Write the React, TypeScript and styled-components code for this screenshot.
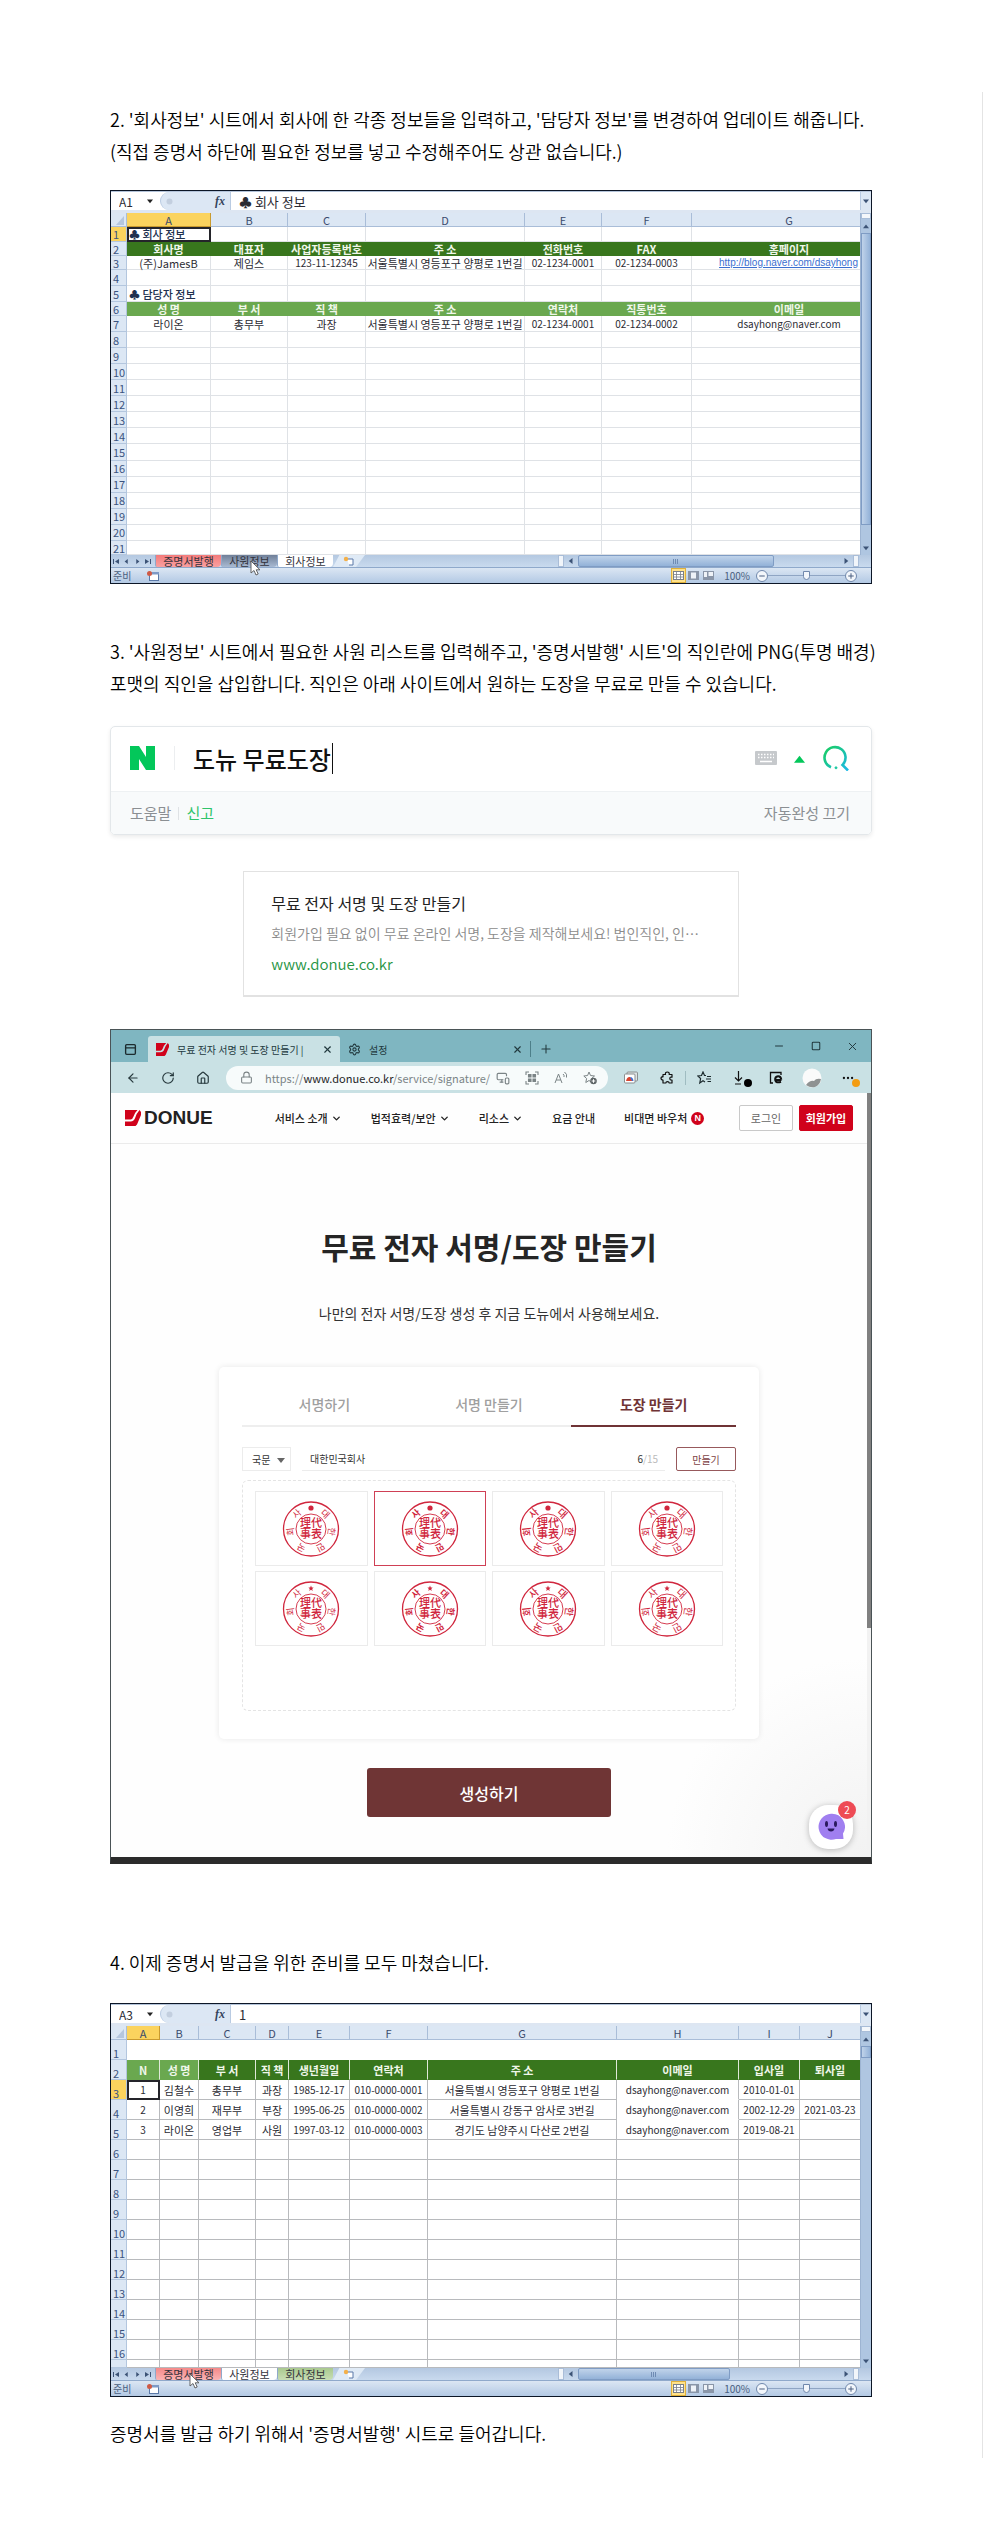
import React from 'react';
import styled, { createGlobalStyle, css } from 'styled-components';
import {
  ArrowLeft, RotateCw, House, Lock, X, Plus, Minus, Square, Settings, MonitorSmartphone,
  ChevronDown, PanelTop, Ellipsis,
} from 'lucide-react';

const KR = `'Noto Sans CJK KR', 'Noto Sans', sans-serif`;

const GlobalStyle = createGlobalStyle`
  * { box-sizing: border-box; }
  body { margin: 0; background: #fff; color: #000; font-family: ${KR}; }
  button, input, select { font-family: inherit; margin: 0; padding: 0; border: 0; background: none; color: inherit; }
  button { cursor: pointer; }
  svg { display: block; flex: none; }
`;

/* ---------- article ---------- */

const Article = styled.main`
  margin-top: 92px;
  padding: 11px 110px 9px;
  border-right: 1px solid #e4e4e4;
`;

const Para = styled.p<{ $top?: number }>`
  margin: ${p => p.$top ?? 0}px 0 0;
  font-size: 18px;
  line-height: 32px;
  font-weight: 350;
  white-space: nowrap;
`;

const Figure = styled.div<{ $top: number }>`
  margin-top: ${p => p.$top}px;
`;

/* ---------- spreadsheet ---------- */

const SheetFrame = styled.section`
  border: 1px solid #0c1626;
  background: #fff;
  color: #2b2b33;
`;

const FormulaBar = styled.div`
  display: flex;
  height: 22px;
  border-top: 1px solid #b4c4da;
  border-bottom: 3px solid #dde6f2;
  font-size: 12px;
`;

const NameBox = styled.label`
  display: flex;
  align-items: center;
  width: 49px;
  padding-left: 8px;
  input { width: 28px; font-size: 12px; height: 18px; }
`;

const FxArea = styled.div`
  display: flex;
  align-items: center;
  justify-content: space-between;
  width: 71px;
  margin-right: 8px;
  padding: 0 5px 0 4px;
  border-left: 1px solid #b9cbe2;
  border-right: 1px solid #b9cbe2;
  border-radius: 9px 0 0 9px;
  background: #dce7f4;
  color: #33435c;
  em { font: italic bold 12px 'Liberation Serif', serif; }
`;

const FormulaInput = styled.input`
  flex: 1;
  min-width: 0;
  font-size: 13px;
  height: 18px;
`;

const DropButton = styled.button`
  display: flex;
  align-items: center;
  justify-content: center;
  width: 11px;
  background: #dce7f4;
  border-left: 1px solid #b9cbe2;
`;

const GridArea = styled.div`
  display: flex;
  height: 342px;
`;

const Grid = styled.table<{ $line: string; $lastPad: number }>`
  flex: 1;
  width: 100%;
  height: 342px;
  table-layout: fixed;
  border-collapse: separate;
  border-spacing: 0;
  font-size: 11px;
  line-height: 12px;
  th, td {
    padding: 0;
    white-space: nowrap;
    text-align: center;
    border-right: 1px solid ${p => p.$line};
    border-bottom: 1px solid ${p => p.$line};
  }
  tr > :last-child { border-right: 0; padding-left: ${p => p.$lastPad}px; }
`;

const ColHead = styled.th<{ $on?: boolean }>`
  height: 14px;
  && { border-color: ${p => (p.$on ? '#c99a2e' : '#a9bdd8')}; }
  background: ${p => (p.$on ? '#fbd35e' : '#dce7f4')};
  color: #3a4a6c;
  font-weight: 400;
`;

const RowHead = styled.th<{ $on?: boolean; $low?: boolean }>`
  && { border-color: #b3c6de; text-align: left; padding-left: 2px; }
  background: ${p => (p.$on ? '#fbd35e' : '#dce7f4')};
  color: #3b5480;
  font-weight: 400;
  vertical-align: ${p => (p.$low ? 'bottom' : 'middle')};
`;

const Cell = styled.td<{ $bg?: string; $sel?: boolean; $num?: boolean; $left?: boolean; $link?: boolean; $noLine?: boolean; $sepColor?: string }>`
  ${p => p.$bg && css`
    && { border-bottom-color: ${p.$bg}; border-right-color: ${p.$sepColor ?? p.$bg}; }
    background: ${p.$bg};
    color: #f0f7ea;
    font-weight: 700;
  `}
  ${p => p.$num && css`font-size: 10px;`}
  ${p => p.$left && css`&& { text-align: left; padding-left: 2px; } color: #20304f; font-weight: 500;`}
  ${p => p.$link && css`&&&& { text-align: right; padding: 0 2px 0 0; }`}
  ${p => p.$noLine && css`&& { border-bottom-color: transparent; }`}
  ${p => p.$sel && css`outline: 2px solid #24242a; outline-offset: -2px;`}
`;

const CellLink = styled.a`
  font-family: 'Liberation Sans', sans-serif;
  font-size: 10px;
  color: #3b6fd0;
`;

const VScroll = styled.div`
  display: flex;
  flex-direction: column;
  width: 11px;
  background: #afc6e1;
  border-left: 1px solid #9db4d2;
`;

const VSplit = styled.div`
  height: 6px;
  background: #f4f7fb;
  border: 1px solid #a9bdd8;
`;

const ArrowSlot = styled.button`
  display: flex;
  align-items: center;
  justify-content: center;
  width: 100%;
  height: 14px;
`;

const VThumb = styled.div<{ $h: number }>`
  height: ${p => p.$h}px;
  margin-bottom: auto;
  border: 1px solid #7f9cc4;
  background: linear-gradient(90deg, #c0d3ea, #93b2d8);
`;

const TabStrip = styled.div`
  display: flex;
  height: 13px;
  background: linear-gradient(#b4c8e1, #c9daee);
  border-bottom: 1px solid #8fa9cb;
`;

const NavArrows = styled.div`
  display: flex;
  align-items: center;
  justify-content: space-between;
  width: 44px;
  padding: 0 4px 0 2px;
`;

const SheetTab = styled.button<{ $bg: string }>`
  position: relative;
  width: 56px;
  height: 12px;
  font-size: 11px;
  line-height: 11px;
  color: #33333c;
  background: ${p => p.$bg};
  border-left: 1px solid #8fa9cb;
  border-radius: 0 0 4px 2px;
  white-space: nowrap;
  &:first-of-type { width: 66px; }
`;

const NewTab = styled.button`
  display: flex;
  align-items: center;
  justify-content: center;
  width: 32px;
  height: 12px;
  background: #dfeaf6;
  clip-path: polygon(20% 0, 100% 0, 72% 100%, 0 100%);
`;

const Pointer = styled.svg`
  position: absolute;
  z-index: 2;
  left: 50%;
  top: 5px;
`;

const HScroll = styled.div`
  display: flex;
  align-items: stretch;
  width: 313px;
  margin-left: auto;
  padding-right: 12px;
`;

const SplitBox = styled.div`
  width: 6px;
  background: #f1f5fa;
  border: 1px solid #a9bdd8;
`;

const HArrow = styled.button`
  display: flex;
  align-items: center;
  justify-content: center;
  width: 14px;
`;

const HThumb = styled.div<{ $w: number }>`
  display: flex;
  align-items: center;
  justify-content: center;
  width: ${p => p.$w}px;
  margin-right: auto;
  border: 1px solid #7f9cc4;
  border-radius: 2px;
  background: linear-gradient(#c0d3ea, #93b2d8);
`;

const StatusBar = styled.div`
  display: flex;
  align-items: center;
  height: 15px;
  padding: 0 14px 0 2px;
  background: linear-gradient(#dbe6f3, #b3c9e4);
  font-size: 10px;
  line-height: 14px;
  color: #4a5f80;
  label { margin-right: 6px; }
`;

const Ready = styled.span`
  width: 33px;
`;

const ViewGroup = styled.div`
  display: flex;
  margin-left: auto;
  margin-right: 8px;
`;

const ViewButton = styled.button<{ $on?: boolean }>`
  display: flex;
  align-items: center;
  justify-content: center;
  width: 15px;
  height: 15px;
  ${p => p.$on && css`background: #ffe28a; border: 1px solid #e0b13c;`}
`;

const RoundButton = styled.button`
  display: flex;
  align-items: center;
  justify-content: center;
  width: 12px;
  height: 12px;
  border: 1px solid #7088ac;
  border-radius: 6px;
  background: #f2f6fb;
`;

const ZoomRange = styled.input`
  appearance: none;
  width: 77px;
  height: 12px;
  background: linear-gradient(#8fa5c4, #8fa5c4) center / 100% 1px no-repeat;
  &::-webkit-slider-thumb {
    appearance: none;
    width: 7px;
    height: 9px;
    border: 1px solid #7088ac;
    border-radius: 0 0 4px 4px;
    background: #f2f6fb;
  }
`;

const Tri = ({ dir, size = 6, color = '#3c5376' }: { dir: 'up' | 'down' | 'left' | 'right'; size?: number; color?: string }) => {
  const d = { up: 'M0 7 L4 2 L8 7Z', down: 'M0 2 L4 7 L8 2Z', left: 'M6 0 L1 4 L6 8Z', right: 'M2 0 L7 4 L2 8Z' }[dir];
  return <svg width={size} height={size} viewBox="0 0 8 8"><path d={d} fill={color} /></svg>;
};

const EndTri = ({ flip }: { flip?: boolean }) => (
  <svg width="6" height="5" viewBox="0 0 6 5" fill="#3c5376">
    <path d={flip ? 'M0 0 L4 2.500 L0 5Z M5 0H6V5H5Z' : 'M6 0 L2 2.500 L6 5Z M0 0H1V5H0Z'} />
  </svg>
);

const ArrowPointer = () => (
  <Pointer width="11" height="16" viewBox="0 0 11 16">
    <path d="M1 1 V13 L4 10.5 L6 15 L8.2 14 L6.2 9.8 H10Z" fill="#fff" stroke="#555" strokeWidth="0.9" />
  </Pointer>
);

interface CellData { t?: React.ReactNode; bg?: string; sel?: boolean; num?: boolean; left?: boolean; link?: boolean; noLine?: boolean; sep?: string }
interface RowData { n: number; h?: number; cells?: CellData[]; on?: boolean }
interface SheetProps {
  id: string; cell: string; formula: string; cols: number[]; rows: RowData[]; line: string; low?: boolean;
  lastPad?: number; vThumb: number; hThumb: number; tabs: { name: string; bg: string; pointer?: boolean }[];
}

const Sheet = ({ id, cell, formula, cols, rows, line, low, lastPad = 0, vThumb, hThumb, tabs }: SheetProps) => (
  <SheetFrame>
    <FormulaBar>
      <NameBox>
        <input aria-label="이름 상자" defaultValue={cell} />
        <Tri dir="down" color="#222" />
      </NameBox>
      <FxArea>
        <svg width="9" height="9" viewBox="0 0 9 9"><circle cx="4.5" cy="4.5" r="3" fill="#c3cfdf" /></svg>
        <em>fx</em>
      </FxArea>
      <FormulaInput aria-label="수식 입력줄" defaultValue={formula} />
      <DropButton aria-label="수식 펼치기"><Tri dir="down" /></DropButton>
    </FormulaBar>
    <GridArea>
      <Grid $line={line} $lastPad={lastPad}>
        <colgroup>{cols.map((w, i) => <col key={i} width={w} />)}</colgroup>
        <thead>
          <tr>
            <ColHead aria-label="모두 선택"><svg width="15" height="12" viewBox="0 0 15 12"><path d="M13 2V11H5Z" fill="#b5c6dd" /></svg></ColHead>
            {cols.slice(1).map((_, i) => <ColHead key={i} $on={i === 0} scope="col">{'ABCDEFGHIJ'[i]}</ColHead>)}
          </tr>
        </thead>
        <tbody>
          {rows.map(r => (
            <tr key={r.n} style={r.h ? { height: r.h } : undefined}>
              <RowHead scope="row" $on={r.on} $low={low}>{r.n > 0 ? r.n : null}</RowHead>
              {cols.slice(1).map((_, i) => {
                const c = r.cells?.[i] ?? {};
                return (
                  <Cell key={i} $bg={c.bg} $sel={c.sel} $num={c.num} $left={c.left} $link={c.link} $noLine={c.noLine} $sepColor={c.sep}>{c.t}</Cell>
                );
              })}
            </tr>
          ))}
        </tbody>
      </Grid>
      <VScroll>
        <VSplit />
        <ArrowSlot aria-label="위로"><Tri dir="up" /></ArrowSlot>
        <VThumb $h={vThumb} />
        <ArrowSlot aria-label="아래로"><Tri dir="down" /></ArrowSlot>
      </VScroll>
    </GridArea>
    <TabStrip>
      <NavArrows>
        <EndTri /><Tri dir="left" size={5} /><Tri dir="right" size={5} /><EndTri flip />
      </NavArrows>
      {tabs.map(t => (
        <SheetTab key={t.name} $bg={t.bg}>{t.name}{t.pointer && <ArrowPointer />}</SheetTab>
      ))}
      <NewTab aria-label="새 시트">
        <svg width="12" height="10" viewBox="0 0 12 10">
          <path d="M4 3H10V9H6" fill="#fff" stroke="#5b79a8" />
          <circle cx="3" cy="3" r="2.2" fill="#f3b04a" />
        </svg>
      </NewTab>
      <HScroll>
        <SplitBox />
        <HArrow aria-label="왼쪽"><Tri dir="left" /></HArrow>
        <HThumb $w={hThumb}>
          <svg width="6" height="5" viewBox="0 0 6 5"><path d="M.5 0V5M2.5 0V5M4.5 0V5" stroke="#6f8bb3" /></svg>
        </HThumb>
        <HArrow aria-label="오른쪽"><Tri dir="right" /></HArrow>
        <SplitBox />
      </HScroll>
    </TabStrip>
    <StatusBar>
      <Ready>준비</Ready>
      <svg width="14" height="12" viewBox="0 0 14 12">
        <rect x="3.5" y="2.5" width="9" height="8" fill="#fff" stroke="#5b79a8" />
        <rect x="3" y="2" width="10" height="2.5" fill="#7e9ac6" />
        <circle cx="3.5" cy="3.5" r="2.5" fill="#cf5a45" />
      </svg>
      <ViewGroup>
        <ViewButton $on aria-label="기본">
          <svg width="11" height="9" viewBox="0 0 11 9"><rect x=".5" y=".5" width="10" height="8" fill="#fff" stroke="#7a7f88" /><path d="M0 3.5H11M0 6H11M3.5 0V9M7.5 0V9" stroke="#7a7f88" strokeWidth=".8" /></svg>
        </ViewButton>
        <ViewButton aria-label="페이지 레이아웃">
          <svg width="11" height="9" viewBox="0 0 11 9"><rect width="11" height="9" fill="#8a96a8" /><rect x="3" y="1.5" width="5" height="6" fill="#eef2f7" /></svg>
        </ViewButton>
        <ViewButton aria-label="페이지 나누기">
          <svg width="11" height="9" viewBox="0 0 11 9"><rect width="11" height="9" fill="#8a96a8" /><path d="M1 1H4V6H1ZM5.500 1H10V5H5.500Z" fill="#eef2f7" /></svg>
        </ViewButton>
      </ViewGroup>
      <label htmlFor={`zoom-${id}`}>100%</label>
      <RoundButton aria-label="축소"><Minus size={8} strokeWidth={3} /></RoundButton>
      <ZoomRange id={`zoom-${id}`} type="range" defaultValue={50} />
      <RoundButton aria-label="확대"><Plus size={8} strokeWidth={3} /></RoundButton>
    </StatusBar>
  </SheetFrame>
);

const DARK = '#38761d';
const LIGHT = '#6aa84f';
const text = (t: string): CellData => ({ t });
const num = (t: string): CellData => ({ t, num: true });
const heads = (bg: string, names: string[]): CellData[] => names.map(t => ({ t, bg }));
const blanks = (from: number, to: number): RowData[] =>
  Array.from({ length: to - from + 1 }, (_, i) => ({ n: from + i }));

const companyRows: RowData[] = [
  { n: 1, h: 15, on: true, cells: [{ t: '♣ 회사 정보', left: true, sel: true }] },
  { n: 2, h: 14, cells: heads(DARK, ['회사명', '대표자', '사업자등록번호', '주 소', '전화번호', 'FAX', '홈페이지']) },
  {
    n: 3, h: 13, cells: [
      text('(주)JamesB'), text('제임스'), num('123-11-12345'), text('서울특별시 영등포구 양평로 1번길'),
      num('02-1234-0001'), num('02-1234-0003'),
      { link: true, num: true, t: <CellLink href="http://blog.naver.com/dsayhong">http://blog.naver.com/dsayhong</CellLink> },
    ],
  },
  { n: 4, h: 16 },
  { n: 5, h: 16, cells: [{ t: '♣ 담당자 정보', left: true }] },
  { n: 6, h: 14, cells: heads(LIGHT, ['성 명', '부 서', '직 책', '주 소', '연락처', '직통번호', '이메일']) },
  {
    n: 7, h: 16, cells: [
      text('라이온'), text('총무부'), text('과장'), text('서울특별시 영등포구 양평로 1번길'),
      num('02-1234-0001'), num('02-1234-0002'), num('dsayhong@naver.com'),
    ],
  },
  ...blanks(8, 20),
  { n: 21, h: 14 },
];

const person = (v: string[], last: boolean): CellData[] =>
  v.map((t, i) => ({ t, num: [0, 4, 5, 7, 8, 9].includes(i), sel: t === '1' && i === 0, noLine: i === 7 && !last }));

const staffRows: RowData[] = [
  { n: 1, h: 20, cells: Array.from({ length: 10 }, () => ({ bg: '#ffffff' })) },
  {
    n: 2, h: 20, cells: ['N', '성 명', '부 서', '직 책', '생년월일', '연락처', '주 소', '이메일', '입사일', '퇴사일']
      .map((t, i) => ({ t, bg: i < 2 ? LIGHT : DARK, sep: '#dfe9d8' })),
  },
  { n: 3, h: 20, on: true, cells: person(['1', '김철수', '총무부', '과장', '1985-12-17', '010-0000-0001', '서울특별시 영등포구 양평로 1번길', 'dsayhong@naver.com', '2010-01-01', ''], false) },
  { n: 4, h: 20, cells: person(['2', '이영희', '재무부', '부장', '1995-06-25', '010-0000-0002', '서울특별시 강동구 암사로 3번길', 'dsayhong@naver.com', '2002-12-29', '2021-03-23'], false) },
  { n: 5, h: 20, cells: person(['3', '라이온', '영업부', '사원', '1997-03-12', '010-0000-0003', '경기도 남양주시 다산로 2번길', 'dsayhong@naver.com', '2019-08-21', ''], true) },
  ...blanks(6, 16),
  { n: 0, h: 8 },
];

/* ---------- search box ---------- */

const SearchBox = styled.form`
  border: 1px solid #e3e7ea;
  border-radius: 5px;
  box-shadow: 0 2px 4px rgba(0, 0, 0, 0.08);
  overflow: hidden;
`;

const SearchTop = styled.div`
  display: flex;
  align-items: center;
  height: 64px;
  padding: 0 21px 2px 19px;
`;

const SearchDivider = styled.i`
  width: 1px;
  height: 24px;
  margin: 0 18px 0 19px;
  background: #eceef0;
`;

const SearchInput = styled.input`
  width: 139px;
  height: 32px;
  font-size: 24px;
  font-weight: 500;
  color: #111;
`;

const Caret = styled.i`
  width: 1px;
  height: 31px;
  margin-right: auto;
  background: #111;
`;

const SearchTools = styled.div`
  display: flex;
  align-items: center;
  gap: 17px;
  button { display: flex; }
`;

const SearchBottom = styled.div`
  display: flex;
  align-items: center;
  gap: 7px;
  height: 43px;
  padding: 0 21px 0 19px;
  border-top: 1px solid #eef1f3;
  background: #f8fafb;
  font-size: 15px;
  line-height: 20px;
`;

const BottomLink = styled.a<{ $color: string; $end?: boolean }>`
  color: ${p => p.$color};
  text-decoration: none;
  ${p => p.$end && css`margin-left: auto;`}
`;

const Bar = styled.i`
  width: 1px;
  height: 13px;
  background: #dfe2e5;
`;

/* ---------- result card ---------- */

const ResultCard = styled.article`
  width: 65%;
  margin: 36px auto 0;
  padding: 19px 26px 18px 27px;
  border: 1px solid #e2e2e2;
  border-bottom-width: 2px;
`;

const ResultTitle = styled.h3`
  margin: 0;
  font-size: 16px;
  line-height: 24px;
  font-weight: 400;
  color: #222;
`;

const ResultDesc = styled.p`
  margin: 5px 0 0;
  font-size: 14px;
  line-height: 26px;
  font-weight: 350;
  color: #8b8b8b;
  white-space: nowrap;
`;

const ResultUrl = styled.a`
  display: block;
  margin-top: 5px;
  font-size: 15px;
  line-height: 26px;
  font-weight: 350;
  color: #259443;
  text-decoration: none;
`;

/* ---------- browser window ---------- */

const Browser = styled.section`
  border: 1px solid #4a5356;
  border-bottom: 7px solid #2b2b2b;
`;

const TabBar = styled.div`
  display: flex;
  align-items: flex-end;
  height: 32px;
  background: #7fb6c1;
  color: #22393e;
`;

const PanelSlot = styled.button`
  display: flex;
  justify-content: center;
  width: 37px;
  padding: 0 0 6px 1px;
`;

const BrowserTab = styled.div<{ $on?: boolean }>`
  display: flex;
  align-items: center;
  gap: 8px;
  width: ${p => (p.$on ? 192 : 190)}px;
  height: 26px;
  padding: 0 7px 0 8px;
  border-radius: 3px 3px 0 0;
  background: ${p => (p.$on ? '#c9e1e4' : 'transparent')};
  font-size: 10px;
  white-space: nowrap;
  button { display: flex; margin-left: auto; }
`;

const NewTabButton = styled.button`
  display: flex;
  align-items: center;
  height: 16px;
  margin-bottom: 5px;
  padding-left: 8px;
  border-left: 1px solid #4d7f89;
`;

const WindowButtons = styled.div`
  display: flex;
  align-self: stretch;
  margin-left: auto;
  button { display: flex; align-items: center; justify-content: center; width: 37px; }
`;

const Toolbar = styled.div`
  display: flex;
  align-items: center;
  height: 31px;
  padding: 0 5px 0 15px;
  background: #c9e1e4;
  color: #26383c;
`;

const NavButtons = styled.div`
  display: flex;
  gap: 21px;
  margin-right: 16px;
  button { display: flex; }
`;

const AddressBar = styled.div`
  display: flex;
  flex: 1;
  align-items: center;
  height: 24px;
  margin-right: 5px;
  padding: 0 11px 0 14px;
  border-radius: 12px;
  background: #f7fbfb;
  color: #7b8486;
  font-size: 11px;
  line-height: 24px;
`;

const Url = styled.div`
  margin: 0 auto 0 12px;
  white-space: nowrap;
  b { font-weight: 400; color: #1d2527; }
`;

const AddressTools = styled.div`
  display: flex;
  gap: 15px;
`;

const ToolSlot = styled.button`
  position: relative;
  display: flex;
  align-items: center;
  justify-content: center;
  width: 36px;
  height: 24px;
`;

const ToolSep = styled.i`
  width: 1px;
  height: 14px;
  background: #9fbcc1;
`;

const Dot = styled.span<{ $bg: string }>`
  position: absolute;
  right: 6px;
  bottom: 3px;
  width: 8px;
  height: 8px;
  border-radius: 4px;
  background: ${p => p.$bg};
`;

const Viewport = styled.div`
  display: flex;
`;

const PageScroll = styled.div`
  width: 4px;
  background: #f2f2f2;
`;

const PageThumb = styled.div`
  height: 535px;
  background: #808080;
`;

const Page = styled.div`
  position: relative;
  flex: 1;
  padding-bottom: 40px;
  background: radial-gradient(circle at 100% 100%, #f2f2f2 0, #fefefe 200px);
`;

const SiteHeader = styled.header`
  display: flex;
  align-items: center;
  height: 51px;
  padding: 0 14px;
  border-bottom: 1px solid #ebebeb;
  font-size: 11px;
  white-space: nowrap;
  color: #222;
`;

const Brand = styled.a`
  display: flex;
  align-items: center;
  gap: 3px;
  margin-right: 62px;
  font: bold 19px 'Liberation Sans', sans-serif;
  color: #222;
  text-decoration: none;
`;

const SiteNav = styled.nav`
  display: flex;
  gap: 29px;
`;

const NavLink = styled.a`
  display: flex;
  align-items: center;
  gap: 3px;
  font-weight: 500;
  color: #222;
  text-decoration: none;
`;

const NewBadge = styled.span`
  width: 13px;
  height: 13px;
  margin-left: 1px;
  border-radius: 7px;
  background: #d0021b;
  color: #fff;
  font: bold 9px/13px 'Liberation Sans', sans-serif;
  text-align: center;
`;

const AuthButton = styled.button<{ $fill?: boolean }>`
  width: 54px;
  height: 26px;
  border: 1px solid ${p => (p.$fill ? '#d0021b' : '#c9c9c9')};
  border-radius: 2px;
  background: ${p => (p.$fill ? '#d0021b' : '#fff')};
  color: ${p => (p.$fill ? '#fff' : '#666')};
  font-size: 11px;
  font-weight: ${p => (p.$fill ? 700 : 400)};
`;

const Auth = styled.div`
  display: flex;
  gap: 6px;
  margin-left: auto;
`;

const Title = styled.h1`
  margin: 82px 0 0;
  font-size: 30px;
  line-height: 40px;
  font-weight: 700;
  text-align: center;
  color: #252525;
`;

const Lead = styled.p`
  margin: 37px 0 0;
  font-size: 14px;
  line-height: 20px;
  text-align: center;
  color: #333;
`;

const Maker = styled.div`
  width: 540px;
  max-width: 100%;
  margin: 44px auto 0;
  padding: 16px 23px 28px;
  border-radius: 5px;
  background: #fff;
  box-shadow: 0 0 6px rgba(0, 0, 0, 0.09);
`;

const MakerTabs = styled.div`
  display: grid;
  grid-template-columns: repeat(3, 1fr);
`;

const MakerTab = styled.button<{ $on?: boolean }>`
  height: 44px;
  border-bottom: 2px solid ${p => (p.$on ? '#6f3335' : '#eeeeee')};
  font-size: 14px;
  font-weight: ${p => (p.$on ? 700 : 500)};
  color: ${p => (p.$on ? '#6f3335' : '#a0a0a0')};
`;

const MakerForm = styled.div`
  display: flex;
  gap: 11px;
  height: 24px;
  margin-top: 20px;
  font-size: 10px;
  color: #333;
`;

const LangSelect = styled.div`
  position: relative;
  width: 49px;
  border: 1px solid #ececec;
  select { appearance: none; width: 100%; height: 22px; padding-left: 9px; font-size: 10px; }
  svg { position: absolute; right: 5px; top: 8px; pointer-events: none; }
`;

const NameField = styled.label`
  display: flex;
  flex: 1;
  align-items: center;
  padding: 0 7px 0 8px;
  border-bottom: 1px solid #ececec;
  input { flex: 1; min-width: 0; height: 22px; font-size: 10px; }
  span { color: #bbb; }
  b { color: #333; font-weight: 400; }
`;

const MakeButton = styled.button`
  width: 60px;
  border: 1px solid #97595c;
  border-radius: 2px;
  font-size: 10px;
  color: #7d4245;
`;

const StampGrid = styled.div`
  display: grid;
  grid-template-columns: repeat(4, 1fr);
  grid-auto-rows: 75px;
  gap: 5px 6px;
  height: 231px;
  margin-top: 9px;
  padding: 10px 12px;
  border: 1px dashed #e4e4e4;
  border-radius: 6px;
`;

const StampCell = styled.button<{ $on?: boolean }>`
  display: flex;
  align-items: center;
  justify-content: center;
  border: 1px solid ${p => (p.$on ? '#cf4055' : '#ebebeb')};
`;

const CreateButton = styled.button`
  display: block;
  width: 244px;
  height: 49px;
  margin: 29px auto 0;
  border-radius: 3px;
  background: #6f3535;
  color: #fff;
  font-size: 16px;
  font-weight: 500;
`;

const Chat = styled.button`
  position: absolute;
  right: 14px;
  bottom: 8px;
  display: flex;
  align-items: center;
  justify-content: center;
  width: 44px;
  height: 44px;
  border-radius: 19px;
  background: #fff;
  box-shadow: 0 1px 6px rgba(0, 0, 0, 0.25);
`;

const ChatCount = styled.span`
  position: absolute;
  right: -3px;
  top: -4px;
  width: 18px;
  height: 18px;
  border-radius: 9px;
  background: #ee4b55;
  color: #fff;
  font-size: 10px;
  line-height: 18px;
`;

const DonueMark = ({ size }: { size: number }) => (
  <svg width={size} height={size} viewBox="0 0 16 16">
    <path d="M0 0H12.500Q9.500 3 8.500 6.500 7.500 9.500 5.500 9.500H0ZM14.500 0 16 2V5L12 14.500 10.500 16H0V11.500H5.500Q9 11.500 10.300 7.500 11.500 3.500 14.500 0Z" fill="#d0021b" />
  </svg>
);

const RING: [string, number][] = [['대', 43], ['한', 97], ['민', 152], ['국', 208], ['회', 263], ['사', 317]];
const RING_STYLES = [
  { size: 9, weight: 400 },
  { size: 9, weight: 700 },
  { size: 10, weight: 500 },
  { size: 10, weight: 400 },
];

const Stamp = ({ variant, star }: { variant: number; star: boolean }) => {
  const s = RING_STYLES[variant];
  return (
    <svg width="58" height="56" viewBox="-29 -28 58 56" fontFamily={KR} fill="#d0263d" textAnchor="middle">
      <g fill="none" stroke="#d0263d">
        <ellipse rx="27.500" ry="27" strokeWidth="1.300" />
        <circle r="15" strokeWidth="0.900" />
      </g>
      {star
        ? <path d="M0-23.500 L.8-21.500H2.600L1.200-20 1.800-18 0-19.200-1.800-18-1.200-20-2.600-21.500H-.8Z" />
        : <circle cy="-21" r="2.600" />}
      {RING.map(([ch, a]) => (
        <text key={ch} transform={`rotate(${a}) translate(0 -17.500)`} fontSize={s.size} fontWeight={s.weight}>{ch}</text>
      ))}
      <g fontSize="11" fontWeight="500">
        <text y="-2">理代</text>
        <text y="9">事表</text>
      </g>
    </svg>
  );
};

const BrowserWindow = () => (
  <Browser>
    <TabBar>
      <PanelSlot aria-label="탭 작업"><PanelTop size={13} strokeWidth={2.500} color="#1c2b2e" /></PanelSlot>
      <BrowserTab $on>
        <DonueMark size={13} />
        <span>무료 전자 서명 및 도장 만들기 |</span>
        <button aria-label="탭 닫기"><X size={11} strokeWidth={2.500} /></button>
      </BrowserTab>
      <BrowserTab>
        <Settings size={13} />
        <span>설정</span>
        <button aria-label="탭 닫기"><X size={11} strokeWidth={2.500} /></button>
      </BrowserTab>
      <NewTabButton aria-label="새 탭"><Plus size={14} strokeWidth={1.800} /></NewTabButton>
      <WindowButtons>
        <button aria-label="최소화"><Minus size={12} /></button>
        <button aria-label="최대화"><Square size={10} strokeWidth={2.500} /></button>
        <button aria-label="닫기"><X size={13} strokeWidth={1.800} /></button>
      </WindowButtons>
    </TabBar>
    <Toolbar>
      <NavButtons>
        <button aria-label="뒤로"><ArrowLeft size={14} /></button>
        <button aria-label="새로 고침"><RotateCw size={14} /></button>
        <button aria-label="홈"><House size={14} /></button>
      </NavButtons>
      <AddressBar>
        <Lock size={13} />
        <Url role="textbox" aria-label="주소">https://<b>www.donue.co.kr</b>/service/signature/</Url>
        <AddressTools>
          <MonitorSmartphone size={14} />
          <svg width="14" height="14" viewBox="0 0 14 14" fill="none" stroke="currentColor" strokeWidth="1.100">
            <path d="M1 4V1H4M10 1H13V4M13 10V13H10M4 13H1V10" />
            <path d="M3.500 3.500H6V6H3.500ZM8 3.500H10.500V6H8ZM3.500 8H6V10.500H3.500ZM8 8H10.500V10.500H8Z" fill="currentColor" />
          </svg>
          <svg width="14" height="14" viewBox="0 0 14 14" fill="none" stroke="currentColor">
            <path d="M1 12 L4.500 3 L8 12M2.200 9H6.800M9 3Q10.500 4 10 6M10.500 1Q13.500 3 12.500 6.500" />
          </svg>
          <svg width="14" height="14" viewBox="0 0 14 14">
            <path d="M6 1 L7.500 4.500 11.500 5 8.500 7.500 9 11.500 6 9.500 2.800 11.500 3.600 7.500.8 5 4.600 4.500Z" fill="none" stroke="currentColor" />
            <circle cx="10.500" cy="10" r="3.300" fill="#5f6668" />
            <path d="M10.500 8.200V11.800M8.700 10H12.300" stroke="#fff" />
          </svg>
        </AddressTools>
      </AddressBar>
      <ToolSlot aria-label="컬렉션">
        <svg width="14" height="13" viewBox="0 0 14 13">
          <rect x="3" y="1" width="10.500" height="9" rx="1" fill="#dce3e4" stroke="#8a8f90" />
          <rect x=".5" y="3" width="10.500" height="9" rx="1" fill="#fff" stroke="#8a8f90" />
          <path d="M2 10Q3 5.500 6 6L9 10Z" fill="#d9452f" /><path d="M6 6Q9 6 9.500 10H8Z" fill="#3c6fd6" />
        </svg>
      </ToolSlot>
      <ToolSlot aria-label="확장">
        <svg width="14" height="14" viewBox="0 0 14 14" fill="none" stroke="#111" strokeWidth="1.200">
          <path d="M3 3.500H5.500Q5 1 7.300 1T9.200 3.500H12V6.200Q9.800 5.800 9.800 7.500T12 9V12H9.200Q9 10.600 7.500 10.600T5.800 12H3V9Q1 9 1 7.300T3 6Z" strokeLinejoin="round" />
        </svg>
      </ToolSlot>
      <ToolSep />
      <ToolSlot aria-label="즐겨찾기">
        <svg width="15" height="14" viewBox="0 0 15 14" fill="none" stroke="#1c2b2e" strokeWidth="1.200">
          <path d="M9 4.500 L7.500 4.500 6 1 4.500 4.500.8 5 3.600 7.500 2.800 12 6 9.800 8 11M10 5.500H14M9 8H14M10.500 10.500H14" />
        </svg>
      </ToolSlot>
      <ToolSlot aria-label="다운로드">
        <svg width="14" height="14" viewBox="0 0 14 14" fill="none" stroke="#111" strokeWidth="1.200"><path d="M5.500 0V10M2 6.500 L5.500 10 9 6.500M2 13H8" /></svg>
        <Dot $bg="#000" />
      </ToolSlot>
      <ToolSlot aria-label="IE 모드">
        <svg width="14" height="14" viewBox="0 0 14 14">
          <path d="M12 4V1.500H1.500V12H4" fill="none" stroke="#111" strokeWidth="1.300" />
          <path d="M12.500 9H6.500M12.300 8.600Q11.800 5 9 5.200 5.800 5.600 6.200 9 7 12.500 12 10.800" fill="none" stroke="#111" strokeWidth="2" />
        </svg>
      </ToolSlot>
      <ToolSlot aria-label="프로필">
        <svg width="20" height="20" viewBox="0 0 20 20"><circle cx="10" cy="10" r="9.500" fill="#fafafa" /><path d="M4 17Q8 12 12 13 14 10 19 11 18 17 13 19 8 20 4 17Z" fill="#8f9292" /></svg>
      </ToolSlot>
      <ToolSlot aria-label="더 보기"><Ellipsis size={14} color="#111" /><Dot $bg="#f39c12" /></ToolSlot>
    </Toolbar>
    <Viewport>
      <Page>
        <SiteHeader>
          <Brand href="#"><DonueMark size={16} />DONUE</Brand>
          <SiteNav>
            <NavLink href="#">서비스 소개 <ChevronDown size={11} strokeWidth={3} /></NavLink>
            <NavLink href="#">법적효력/보안 <ChevronDown size={11} strokeWidth={3} /></NavLink>
            <NavLink href="#">리소스 <ChevronDown size={11} strokeWidth={3} /></NavLink>
            <NavLink href="#">요금 안내</NavLink>
            <NavLink href="#">비대면 바우처 <NewBadge>N</NewBadge></NavLink>
          </SiteNav>
          <Auth>
            <AuthButton>로그인</AuthButton>
            <AuthButton $fill>회원가입</AuthButton>
          </Auth>
        </SiteHeader>
        <Title>무료 전자 서명/도장 만들기</Title>
        <Lead>나만의 전자 서명/도장 생성 후 지금 도뉴에서 사용해보세요.</Lead>
        <Maker>
          <MakerTabs>
            <MakerTab>서명하기</MakerTab>
            <MakerTab>서명 만들기</MakerTab>
            <MakerTab $on>도장 만들기</MakerTab>
          </MakerTabs>
          <MakerForm>
            <LangSelect>
              <select aria-label="언어" defaultValue="국문"><option>국문</option></select>
              <Tri dir="down" size={8} color="#666" />
            </LangSelect>
            <NameField>
              <input aria-label="회사 이름" defaultValue="대한민국회사" />
              <span><b>6</b>/15</span>
            </NameField>
            <MakeButton>만들기</MakeButton>
          </MakerForm>
          <StampGrid>
            {Array.from({ length: 8 }, (_, i) => (
              <StampCell key={i} $on={i === 1}><Stamp variant={i % 4} star={i > 3} /></StampCell>
            ))}
          </StampGrid>
        </Maker>
        <CreateButton>생성하기</CreateButton>
        <Chat aria-label="채팅">
          <svg width="28" height="28" viewBox="0 0 28 28">
            <path d="M14 .8A13 13 0 1 0 19 26H26.500L26 20.500A13 13 0 0 0 14 .8Z" fill="#a07ff0" />
            <ellipse cx="9.500" cy="11" rx="1.500" ry="3" fill="#2b1a5e" />
            <ellipse cx="18.500" cy="11" rx="1.500" ry="3" fill="#2b1a5e" />
            <path d="M10.500 15.500H17.500Q17 18.500 14 18.500T10.500 15.500Z" fill="#2b1a5e" />
          </svg>
          <ChatCount>2</ChatCount>
        </Chat>
      </Page>
      <PageScroll><PageThumb /></PageScroll>
    </Viewport>
  </Browser>
);

export default function App() {
  return (
    <>
      <GlobalStyle />
      <Article>
        <Para>
          2. '회사정보' 시트에서 회사에 한 각종 정보들을 입력하고, '담당자 정보'를 변경하여 업데이트 해줍니다.<br />
          (직접 증명서 하단에 필요한 정보를 넣고 수정해주어도 상관 없습니다.)
        </Para>
        <Figure $top={23}>
          <Sheet
            id="company" cell="A1" formula="♣ 회사 정보" line="#dfe2e6" lastPad={26}
            cols={[16, 84, 77, 78, 159, 77, 90, 168]} rows={companyRows} vThumb={292} hThumb={196}
            tabs={[
              { name: '증명서발행', bg: 'linear-gradient(#f47b7b, #f9a0a0)' },
              { name: '사원정보', bg: 'linear-gradient(#6f7f98, #a9bad2)', pointer: true },
              { name: '회사정보', bg: '#fff' },
            ]}
          />
        </Figure>
        <Para $top={51}>
          3. '사원정보' 시트에서 필요한 사원 리스트를 입력해주고, '증명서발행' 시트'의 직인란에 PNG(투명 배경)<br />
          포맷의 직인을 삽입합니다. 직인은 아래 사이트에서 원하는 도장을 무료로 만들 수 있습니다.
        </Para>
        <Figure $top={27}>
          <SearchBox onSubmit={e => e.preventDefault()}>
            <SearchTop>
              <svg width="25" height="24" viewBox="0 0 25 24"><path d="M0 0H9L16 11V0H25V24H16L9 13V24H0Z" fill="#03c75a" /></svg>
              <SearchDivider />
              <SearchInput aria-label="검색어" defaultValue="도뉴 무료도장" />
              <Caret />
              <SearchTools>
                <button type="button" aria-label="키보드">
                  <svg width="22" height="14" viewBox="0 0 22 14">
                    <rect width="22" height="14" rx="1" fill="#c6c9cc" />
                    <path d="M3 3.500H19M3 6.500H19" stroke="#fff" strokeWidth="1.500" strokeDasharray="1.500 1.500" /><path d="M5 10.500H17" stroke="#fff" strokeWidth="1.500" />
                  </svg>
                </button>
                <button type="button" aria-label="접기"><Tri dir="up" size={11} color="#03c75a" /></button>
                <button type="submit" aria-label="검색">
                  <svg width="28" height="26" viewBox="0 0 28 26" fill="none" strokeWidth="2.600">
                    <defs><linearGradient id="q" x1="0" y1="0" x2="1" y2="1"><stop offset="0" stopColor="#19ce60" /><stop offset="1" stopColor="#1ab8e8" /></linearGradient></defs>
                    <path d="M9 22.300A10.500 10.500 0 1 1 20.500 20L26 25.500" stroke="url(#q)" />
                    <circle cx="14" cy="22.800" r="1" fill="#19c9a0" stroke="#19c9a0" strokeWidth="1" />
                  </svg>
                </button>
              </SearchTools>
            </SearchTop>
            <SearchBottom>
              <BottomLink href="#" $color="#8b8f93">도움말</BottomLink>
              <Bar />
              <BottomLink href="#" $color="#2fc46b">신고</BottomLink>
              <BottomLink href="#" $color="#8b8f93" $end>자동완성 끄기</BottomLink>
            </SearchBottom>
          </SearchBox>
        </Figure>
        <ResultCard>
          <ResultTitle>무료 전자 서명 및 도장 만들기</ResultTitle>
          <ResultDesc>회원가입 필요 없이 무료 온라인 서명, 도장을 제작해보세요! 법인직인, 인⋯</ResultDesc>
          <ResultUrl href="#">www.donue.co.kr</ResultUrl>
        </ResultCard>
        <Figure $top={32}>
          <BrowserWindow />
        </Figure>
        <Para $top={82}>4. 이제 증명서 발급을 위한 준비를 모두 마쳤습니다.</Para>
        <Figure $top={25}>
          <Sheet
            id="staff" cell="A3" formula="1" line="#b8babd" low
            cols={[16, 33, 39, 57, 33, 61, 78, 189, 122, 61, 60]} rows={staffRows} vThumb={12} hThumb={152}
            tabs={[
              { name: '증명서발행', bg: 'linear-gradient(#f58a8a, #fbb4b4)', pointer: true },
              { name: '사원정보', bg: '#fff' },
              { name: '회사정보', bg: 'linear-gradient(#a9c98f, #c9deb5)' },
            ]}
          />
        </Figure>
        <Para $top={20}>증명서를 발급 하기 위해서 '증명서발행' 시트로 들어갑니다.</Para>
      </Article>
    </>
  );
}
